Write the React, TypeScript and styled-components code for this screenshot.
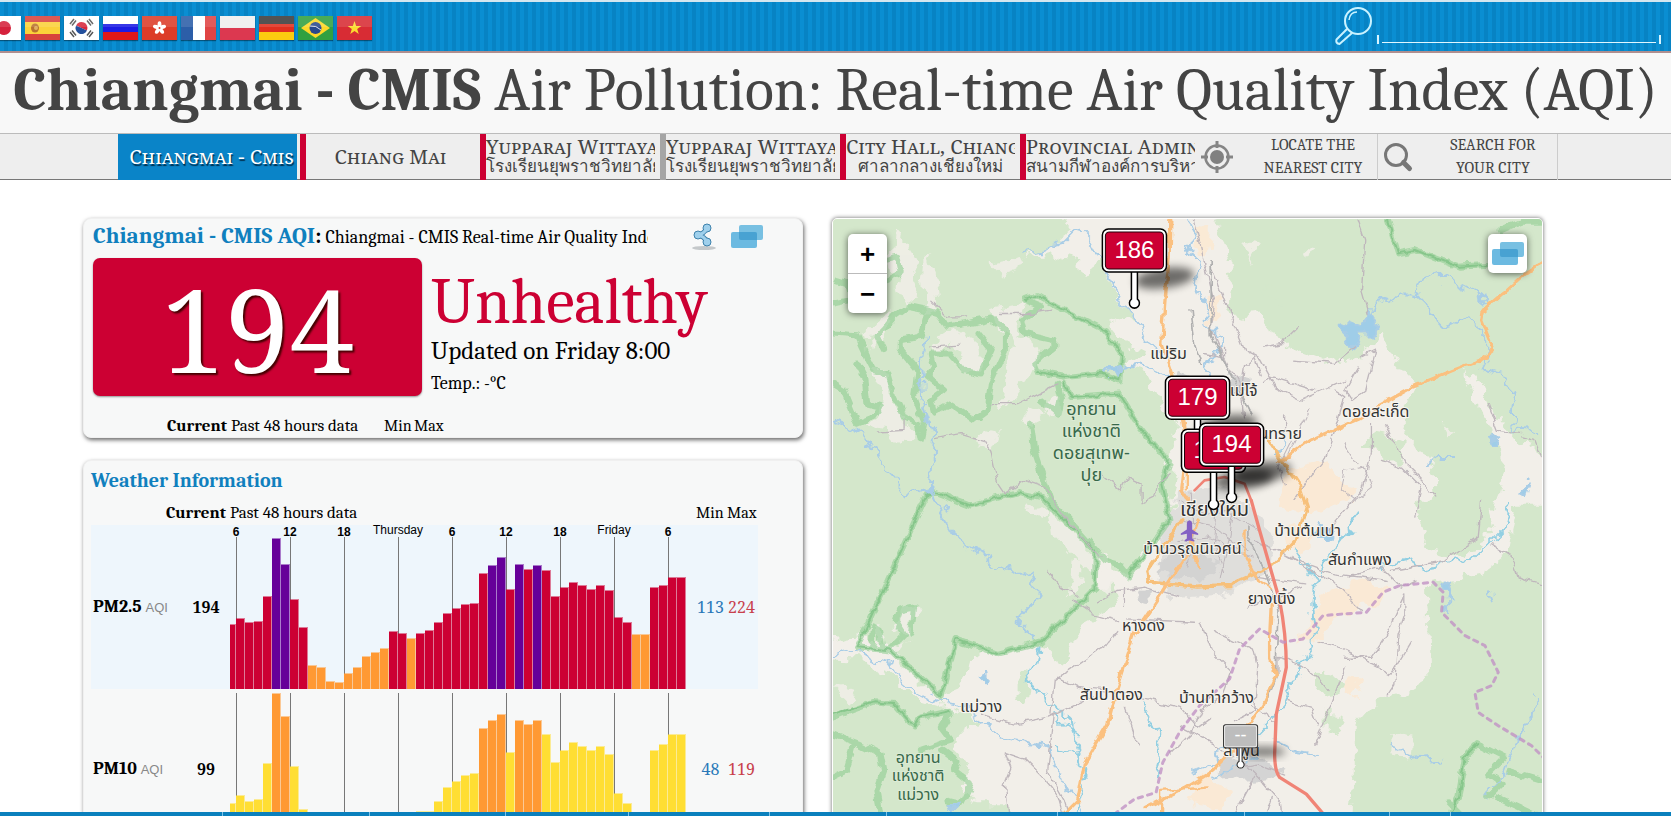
import React from 'react';
import styled, { createGlobalStyle, css } from 'styled-components';

const SERIF = 'Cambria, "Noto Serif", "Liberation Serif", serif';
const WIDE_SERIF = '"Noto Serif", Cambria, "Liberation Serif", serif';
const SANS = '"Liberation Sans", Arial, sans-serif';
const RED = '#cc0033';
const PURPLE = '#660099';
const ORANGE = '#ff9933';
const YELLOW = '#ffde33';

const GlobalStyle = createGlobalStyle`
  *, *::before, *::after { box-sizing: border-box; }
  body { margin: 0; background: #fff; font-family: ${SERIF}; color: #000; }
  button { border: 0; padding: 0; background: none; cursor: pointer; }
  svg { display: block; }
`;

const Page = styled.div`
  display: flex;
  flex-direction: column;
  height: 100vh;
  overflow: hidden;
`;

const TopBar = styled.header`
  display: flex;
  flex: none;
  align-items: center;
  justify-content: space-between;
  height: 53px;
  padding: 0 10px 0 0;
  overflow: hidden;
  border-top: 2px solid #d5e6f0;
  border-bottom: 2px solid #b08f90;
  background: repeating-linear-gradient(90deg, #0a8ed2 0 4px, #0783c4 4px 8px);
`;

const Flags = styled.nav`
  display: flex;
  gap: 4px;
  margin: 2px 0 0 -14px;
`;

const FlagLink = styled.a`
  display: block;
  width: 35px;
  height: 24px;
  box-shadow: 0 1px 1px rgba(0, 0, 0, 0.4);
`;

const SearchForm = styled.form`
  display: flex;
  align-items: flex-start;
  gap: 4px;
  height: 40px;
`;

const SearchField = styled.label`
  display: flex;
  align-items: flex-end;
  gap: 3px;
  height: 37px;
  &::before, &::after {
    content: '';
    width: 2px;
    height: 9px;
    background: #d8f4ff;
  }
`;

const SearchInput = styled.input`
  width: 274px;
  height: 26px;
  margin-bottom: 1px;
  padding: 0 4px;
  border: 0;
  border-bottom: 1px solid #e0f6ff;
  outline: 0;
  background: transparent;
  color: #fff;
  font: 16px ${SERIF};
`;

const TitleBar = styled.div`
  flex: none;
  height: 80px;
  background: #f8f8f8;
  overflow: hidden;
`;

const Title = styled.h1`
  margin: 0;
  color: #444;
  font-size: 60px;
  font-weight: 400;
  line-height: 76px;
  text-align: center;
  white-space: nowrap;
`;

const StationNav = styled.nav`
  display: grid;
  flex: none;
  grid-template-columns: repeat(8, minmax(0, 1fr));
  height: 47px;
  padding: 0 113px 0 118px;
  border-top: 1px solid #bbb;
  border-bottom: 1px solid #777;
  background: #eee;
`;

const StationLink = styled.a<{ $active?: boolean; $strip?: string }>`
  display: flex;
  flex-direction: column;
  justify-content: center;
  min-width: 0;
  overflow: hidden;
  margin: 0 3px 0 ${p => (p.$strip ? '2px' : '0')};
  border-left: ${p => (p.$strip ? `6px solid ${p.$strip}` : '0')};
  color: #444;
  text-align: center;
  text-decoration: none;
  white-space: nowrap;
  ${p => p.$active && css`
    margin-right: 1px;
    padding-left: 8px;
    background: #0a84c8;
    color: #fff;
    text-shadow: 1px 2px 1px #003050;
  `}
`;

const StationName = styled.span`
  overflow: hidden;
  font-family: ${WIDE_SERIF};
  font-size: 20px;
  font-variant: small-caps;
  line-height: 24px;
`;

const StationThai = styled.span`
  overflow: hidden;
  margin-top: -4px;
  font-size: 17px;
  line-height: 24px;
`;

const NavAction = styled.button`
  display: flex;
  align-items: center;
  gap: 20px;
  padding: 0 5px 0 2px;
  border-right: 1px solid #ccc;
  color: #444;
  font: 16px/23px ${SERIF};
  text-transform: uppercase;
`;

const NavActionLabel = styled.span`
  flex: 1;
`;

const Main = styled.main`
  display: grid;
  flex: 1;
  grid-template-columns: 720fr 711fr;
  gap: 29px;
  align-items: start;
  min-height: 0;
  padding: 38px 128px 0 83px;
`;

const Column = styled.div`
  display: flex;
  flex-direction: column;
  gap: 22px;
`;

const Card = styled.section`
  border: 1px solid #f0f0f0;
  border-radius: 8px;
  background: #f7f8f8;
  box-shadow: 1px 2px 4px rgba(0, 0, 0, 0.6);
`;

const AqiCard = styled(Card)`
  height: 220px;
  padding: 0 8px 0 9px;
`;

const AqiHeader = styled.div`
  display: flex;
  align-items: center;
  height: 36px;
`;

const AqiTitle = styled.h2`
  width: 555px;
  margin: 0 43px 0 0;
  overflow: hidden;
  font-size: 18px;
  font-weight: 400;
  line-height: 30px;
  white-space: nowrap;
`;

const AqiTitleLink = styled.a`
  color: #1080be;
  font-size: 23px;
  font-weight: 700;
  text-decoration: none;
`;

const AqiColon = styled.b`
  font-size: 23px;
`;

const IconButton = styled.button`
  display: block;
  margin-right: 14px;
`;

const AqiBody = styled.div`
  display: flex;
  gap: 9px;
  margin-top: 3px;
`;

const AqiValue = styled.div`
  width: 329px;
  height: 138px;
  border-radius: 7px;
  background: ${RED};
  box-shadow: 0 1px 2px rgba(0, 0, 0, 0.4);
  color: #fff;
  font-family: ${WIDE_SERIF};
  font-size: 115px;
  line-height: 142px;
  text-align: center;
  text-shadow: 2px 2px 2px #400;
`;

const AqiLevel = styled.p`
  margin: 6px 0 0;
  color: ${RED};
  font-size: 64px;
  line-height: 76px;
`;

const AqiUpdated = styled.p`
  margin: -6px 0 0;
  font-size: 25px;
  line-height: 34px;
`;

const AqiTemp = styled.p`
  margin: 0;
  font-size: 18px;
  line-height: 32px;
`;

const DataTable = styled.table<{ $inset?: boolean }>`
  border-collapse: collapse;
  font-size: 17px;
  line-height: 20px;
  margin: ${p => (p.$inset ? '16px 0 0' : '10px 0 0')};
  th, td { padding: 0; text-align: left; font-weight: 400; }
`;

const HeadCell = styled.th<{ $w: number; $bold?: boolean; $small?: boolean }>`
  width: ${p => p.$w}px;
  min-width: ${p => p.$w}px;
  && {
    padding: 0 ${p => (p.$bold ? '4px' : '0')} 2px 0;
    font-size: ${p => (p.$small ? '16px' : '17px')};
    text-align: ${p => (p.$bold ? 'right' : 'left')};
    font-weight: ${p => (p.$bold ? 700 : 400)};
    white-space: nowrap;
  }
`;

const SeriesRow = styled.tr<{ $tint?: boolean }>`
  background: ${p => (p.$tint ? '#eef6fc' : 'transparent')};
  border-bottom: 4px solid #f7f8f8;
`;

const SeriesName = styled.th`
  && { padding-left: 2px; font-weight: 700; font-size: 18px; white-space: nowrap; }
`;

const Unit = styled.small`
  color: #888;
  font: 13px ${SANS};
`;

const Current = styled.td`
  && { padding-right: 6px; font-family: ${WIDE_SERIF}; font-size: 16px; font-weight: 700; text-align: center; }
`;

const Bound = styled.td<{ $color: string }>`
  && { padding-right: 2px; color: ${p => p.$color}; font-family: ${WIDE_SERIF}; font-size: 16px; text-align: center; }
`;

const WeatherCard = styled(Card)`
  padding: 8px 8px 0 7px;
`;

const WeatherTitle = styled.h2`
  margin: 0;
  color: #1080be;
  font-size: 20px;
  line-height: 24px;
`;

const MapPanel = styled.section`
  position: relative;
  height: 720px;
  overflow: hidden;
  border: 1px solid #fff;
  border-radius: 5px 5px 0 0;
  background: #f2efe9;
  box-shadow: 0 0 4px rgba(0, 0, 0, 0.6);
  svg.tiles { width: 100%; height: 100%; }
`;

const MapControl = styled.div<{ $side: 'left' | 'right' }>`
  position: absolute;
  top: 15px;
  ${p => p.$side}: 15px;
  display: flex;
  flex-direction: column;
  width: 39px;
  border-radius: 5px;
  background: #fff;
  box-shadow: 0 1px 7px rgba(0, 0, 0, 0.6);
`;

const ZoomButton = styled.button`
  height: 39px;
  font: 700 26px/40px ${SANS};
  & + & { border-top: 1px solid #bbb; height: 40px; }
`;

const LayerButton = styled.button`
  display: flex;
  align-items: center;
  justify-content: center;
  height: 39px;
`;

const Footer = styled.footer`
  position: relative;
  display: flex;
  flex: none;
  gap: 1px;
  height: 4px;
  background: #7fc4ea;
`;

const FooterCell = styled.span<{ $grow: number }>`
  flex: ${p => p.$grow} 1 0;
  background: #0a80bd;
`;

const FLAGS: [string, React.ReactNode][] = [
  ['日本語', <><rect width="35" height="24" fill="#fff" /><circle cx="18" cy="12" r="7" fill="#d5213c" /></>],
  ['Español', <><rect width="35" height="24" fill="#d8423c" /><rect y="6" width="35" height="12" fill="#fbd23a" /><ellipse cx="10" cy="12" rx="4" ry="4.500" fill="#b9722e" /><circle cx="11" cy="12" r="2" fill="#e0b060" /></>],
  ['한국어', <><rect width="35" height="24" fill="#fff" /><g transform="rotate(25 17.500 12)"><path d="M11.500 12a6 6 0 0 1 12 0z" fill="#d8283c" /><path d="M11.500 12a6 6 0 0 0 12 0z" fill="#24509c" /></g><path d="M6 8l4-5M8 9.500l4-5M25 3l4 5M23 4.500l4 5M6 16l4 5M8 14.500l4 5M25 21l4-5M23 19.500l4-5" stroke="#555" strokeWidth="1.500" /></>],
  ['Русский', <><rect width="35" height="8" fill="#fff" /><rect y="8" width="35" height="8" fill="#1c1ce4" /><rect y="16" width="35" height="8" fill="#e01818" /></>],
  ['繁體中文', <><rect width="35" height="24" fill="#dc3c28" /><g fill="#fff">{[0, 72, 144, 216, 288].map(a => <ellipse key={a} cx="17.500" cy="8.500" rx="1.900" ry="3.300" transform={`rotate(${a} 17.500 12)`} />)}</g><circle cx="17.500" cy="12" r="1" fill="#dc3c28" /></>],
  ['Français', <><rect width="12" height="24" fill="#2c5ea8" /><rect x="12" width="12" height="24" fill="#fff" /><rect x="24" width="11" height="24" fill="#e04444" /></>],
  ['Polski', <><rect width="35" height="12" fill="#eee" /><rect y="12" width="35" height="12" fill="#dc3850" /></>],
  ['Deutsch', <><rect width="35" height="8" fill="#3c3c3c" /><rect y="8" width="35" height="8" fill="#e03020" /><rect y="16" width="35" height="8" fill="#fccc10" /></>],
  ['Português', <><rect width="35" height="24" fill="#30a040" /><path d="M3 12L17.500 2 32 12 17.500 22z" fill="#fcd828" /><circle cx="17.500" cy="12" r="6" fill="#28488c" /><path d="M12 10q6-1 11 4" stroke="#dde" fill="none" /></>],
  ['Tiếng Việt', <><rect width="35" height="24" fill="#d82c34" /><path d="M17.500 5l1.700 5h5.100l-4.100 3.100 1.500 5-4.200-3-4.200 3 1.500-5-4.100-3.100h5.100z" fill="#fbdc30" /></>],
];

const STATIONS = [
  { name: 'Chiangmai - Cmis', active: true },
  { name: 'Chiang Mai', strip: RED },
  { name: 'Yupparaj Wittayalai', thai: 'โรงเรียนยุพราชวิทยาลัย', strip: RED },
  { name: 'Yupparaj Wittayalai', thai: 'โรงเรียนยุพราชวิทยาลัย', strip: '#a5a5a5' },
  { name: 'City Hall, Chiangmai', thai: 'ศาลากลางเชียงใหม่', strip: RED },
  { name: 'Provincial Admin', thai: 'สนามกีฬาองค์การบริหาร', strip: RED },
];

const PM25 = [65, 71, 67, 68, 93, 151, 125, 90, 62, 24, 22, 8, 7, 16, 22, 33, 37, 41, 58, 56, 51, 56, 59, 67, 76, 81, 85, 86, 116, 124, 132, 100, 125, 120, 124, 119, 93, 102, 107, 104, 100, 104, 99, 72, 67, 55, 55, 102, 104, 112, 112];
const PM25_PURPLE = [5, 6, 29, 30, 32, 34];
const PM25_ORANGE = [9, 10, 11, 12, 13, 14, 15, 16, 17, 20, 45, 46];
const PM10 = [42, 50, 44, 46, 82, 152, 129, 79, 36, 28, 26, 24, 22, 24, 26, 28, 28, 28, 33, 33, 28, 34, 34, 44, 58, 64, 70, 72, 117, 125, 131, 93, 125, 121, 125, 111, 83, 95, 103, 99, 95, 99, 91, 52, 42, 28, 28, 95, 101, 111, 111];
const PM10_ORANGE = [5, 6, 28, 29, 30, 32, 33, 34];
const TICKS = ['6', '12', '18', 'Thursday', '6', '12', '18', 'Friday', '6'];

function Bars({ data, colorOf, labels }: { data: number[]; colorOf: (i: number) => string; labels?: boolean }) {
  const h = labels ? 164 : 152;
  return (
    <svg width="464" height={h}>
      {TICKS.map((t, i) => (
        <g key={i}>
          <rect x={6 + i * 54} y={labels ? 12 : 0} width="1" height="152" fill="#777" />
          {labels && (
            <text x={6 + i * 54} y={t.length > 2 ? 9 : 11} textAnchor="middle" fontFamily={SANS} fontSize="12" fontWeight={t.length > 2 ? 400 : 700}>{t}</text>
          )}
        </g>
      ))}
      {data.map((v, i) => {
        const x = i ? 6 + (i - 1) * 9 : 0;
        const w = i ? 9 : 6;
        return (
          <g key={i} fill={colorOf(i)}>
            <rect x={x} y={h - v} width={w} height={v} opacity="0.5" />
            <rect x={x} y={h - v + 1} width={w - 1} height={v - 1} />
          </g>
        );
      })}
    </svg>
  );
}

const WindowsIcon = () => (
  <svg width="32" height="24" viewBox="0 0 32 24">
    <rect x="8" y="0" width="24" height="15" rx="2" fill="#78c0e2" />
    <rect x="0" y="7" width="26" height="16" rx="2" fill="#5cb3de" opacity="0.900" />
    <path d="M8 7h16a2 2 0 0 1 2 2v6H10a2 2 0 0 1-2-2z" fill="#48a2d2" />
  </svg>
);

const ShareIcon = () => (
  <svg width="26" height="28" viewBox="0 0 26 28">
    <ellipse cx="13" cy="25" rx="12" ry="2" fill="#c4c8ca" />
    <path d="M16 5q-3 6-9 7 6 1 9 7" fill="none" stroke="#3e82ac" strokeWidth="5" />
    <g fill="#9fd0ec" stroke="#3e82ac"><circle cx="16" cy="5" r="4" /><circle cx="7" cy="12" r="4" /><circle cx="16" cy="19" r="4" /></g>
    <path d="M16 5q-3 6-9 7 6 1 9 7" fill="none" stroke="#9fd0ec" strokeWidth="3" />
  </svg>
);

const TargetIcon = () => (
  <svg width="34" height="34" viewBox="0 0 34 34">
    <circle cx="17" cy="17" r="11.500" fill="none" stroke="#858585" strokeWidth="2.500" />
    <circle cx="17" cy="17" r="7" fill="#808080" />
    <path d="M17 1v7M17 26v7M1 17h7M26 17h7" stroke="#858585" strokeWidth="3" />
  </svg>
);

const LensIcon = () => (
  <svg width="34" height="34" viewBox="0 0 34 34">
    <circle cx="16" cy="15" r="10.500" fill="none" stroke="#777" strokeWidth="3" />
    <path d="M23.500 22.500l6 6" stroke="#777" strokeWidth="5" strokeLinecap="round" />
  </svg>
);

const SearchIcon = () => (
  <svg width="38" height="38" viewBox="0 0 38 38" fill="none" stroke="#c9f2ff" strokeWidth="2">
    <circle cx="23" cy="14" r="13" />
    <path d="M14 13q1-8 8-8" strokeWidth="1.500" />
    <path d="M12 22L1.500 32.500q-1 4 3 4.500L17 26" />
  </svg>
);

/* Areas and lines of the map are drawn in thirds of a pixel. */
function MapTiles() {
  return (
    <svg className="tiles" viewBox="0 0 708 718" preserveAspectRatio="xMinYMin slice" role="img" aria-label="Map of Chiang Mai">
      <defs>
        <filter id="soft" x="-50%" y="-50%" width="200%" height="200%"><feGaussianBlur stdDeviation="4" /></filter>
        <filter id="rough" filterUnits="userSpaceOnUse" x="0" y="0" width="2200" height="2200">
          <feTurbulence type="fractalNoise" baseFrequency="0.022" numOctaves="3" seed="4" />
          <feDisplacementMap in="SourceGraphic" scale="60" xChannelSelector="R" yChannelSelector="G" />
        </filter>
        <filter id="wavy" filterUnits="userSpaceOnUse" x="0" y="0" width="2200" height="2200">
          <feTurbulence type="fractalNoise" baseFrequency="0.03" numOctaves="2" seed="9" />
          <feDisplacementMap in="SourceGraphic" scale="24" xChannelSelector="R" yChannelSelector="G" />
        </filter>
      </defs>
      <rect width="708" height="718" fill="#f2efe9" />
      <g transform="translate(-9 -9) scale(0.333333)" fill="none" strokeLinejoin="round" strokeLinecap="round">
        {/* forest */}
        <g fill="#d4e7cb" filter="url(#rough)">
          <path d="M0 0H700L740 60 690 100 600 150 680 130 760 150 770 200 830 160 880 260 930 320 850 340 900 400 960 430 900 460 960 480 1020 600 1060 640 1020 760 1060 800 1035 930 990 990 910 1095 860 1060 820 1020 815 1130 870 1120 880 1190 790 1240 700 1320 640 1300 520 1335 440 1330 430 1400 350 1455 310 1430 230 1370 200 1310 100 1275 0 1290z" />
          <path d="M0 1345L100 1350 200 1390 290 1470 400 1500 470 1530 400 1580 390 1620 440 1680 410 1720 460 1780 550 1780V1900H0z" />
          <path d="M1165 0H2200V770L2080 690 2000 600 1960 500 1920 480 1960 600 2000 660 2040 760 2010 900 1920 900 1830 880 1820 770 1740 660 1740 590 1770 530 1690 420 1670 370 1600 440 1520 460 1410 420 1340 390 1310 310 1240 320 1215 280 1225 190 1200 110z" />
          <path d="M1770 880H1980L2000 960 1960 1020 1880 1040 1790 1010 1800 960z" />
          <path d="M2080 880H2200V1900H1570L1590 1700 1590 1550 1660 1470 1740 1450 1820 1400 1810 1180 1810 1120 1970 1090 2050 1030z" />
          <path d="M1480 1380l60 20 20 40-60 10-20-30zM1500 1500l60 10-20 70-40-20zM700 1250l60 20-50 100-40-60zM580 1370l40 10-10 100-30-20zM890 880l100 60-80 60-60-30zM1640 670l100 20-20 80-100-60zM1300 240l50-20 10 60z" />
        </g>
        {/* clearings in the forest */}
        <g fill="#f2efe9" opacity="0.850" filter="url(#rough)">
          <path d="M210 60l50 60 20 90-20 80-40-60-20-100zM310 130l20 60 10 90-30 30-10-80zM330 380l60-20 70 30 10 80-50 10-40-70-60 10zM500 300l110-20-40 90 60 10 10 80-60 80-50 60 10-90 30-110zM150 330l60-30-20 60-50 60-10-60zM140 480l50 10 30 130 60 60-50 20-40-40-80-10 60-30 10-50zM480 650l50 10-20 60-60-20zM500 160l90-20 10 30-70 20zM610 590l40 20-20 40-40-20zM700 560l-50 40 50 20zM670 890l130 120 80 110-40 20-40-40-120-130z" />
          <path d="M230 1200l50-10-30 80-30-20zM150 1260l20-10 10 60 70-20-50 60-50-30zM27 1430l70 10-20 40zM740 1050l30 10-10 90-30 10zM620 870l50 40-20 30-40-40zM1250 100l50 10-20 40zM1850 640l50 20-30 20zM1440 110l40 5-30 20zM1700 1570l60 10-10 60-50-10z" />
        </g>
        {/* farm land */}
        <g fill="#fbe9d3" opacity="0.900" filter="url(#rough)">
          <path d="M1110 40l50 20-10 90-40-20zM1400 780l100-30 50 60 50 30-40 40-100 30-100-30zM1400 940l70 40-40 60-60-50zM1640 1110l60 20-60 60-90 10-70 90-60 0 90-150zM1180 250l20 60-40 40-20-60zM1130 1690l90 50-30 50-100-10zM1570 1400l40 10-20 50-40-20z" />
        </g>
        {/* built-up land */}
        <g fill="#d2d2d2" filter="url(#rough)">
          <path d="M1060 850l100-20 110 40 50 60 30 100-40 80-120 40-150 10-40-60 20-140z" opacity="0.600" />
          <path d="M1000 1055l90-60 90 60-30 50-150-10zM1160 1660l110-40 110 60-30 20-90 10-50-10z" opacity="0.900" />
          <path d="M1220 490l50 10 10 50-60 0zM1050 480l50 20-20 40-40-10zM950 1140l30 10-10 30-40-10z" />
        </g>
        {/* park borders */}
        <g stroke="#8fce92" strokeWidth="18" opacity="0.600" filter="url(#wavy)">
          <path d="M27 370L100 375 130 440 150 480 190 490 210 560 240 620 280 640 290 690 300 640 270 560 280 480 230 420 230 390 290 380 310 300 340 310 370 350 430 340 500 325 545 360 545 420 500 520 490 600 450 630 380 580 330 610 320 570 360 540 310 500 330 470 320 430 380 430 420 480 470 490 500 420 460 370" />
          <path d="M27 520L60 540 80 590 100 640 150 620 170 590 130 580 120 500 100 460M180 420L160 380 210 320 250 290 300 300" />
          <path d="M600 270L640 255 700 290 760 320 840 360 890 430 885 510 830 490 720 500 640 485 630 460 690 410 690 390 600 370 590 330 650 290z" />
          <path d="M700 520L710 560 700 610 650 570M720 520L740 560 885 550 940 640 1035 760 1010 820 1035 930 990 990 910 1095 880 1060 840 1050 815 1020 680 870 630 720 620 640" />
          <path d="M300 870L100 1310 200 1320 350 1455 395 1285 520 1330 650 1295 810 1135 815 1020 650 860 580 845 440 885 320 840z" />
          <path d="M200 1310L240 1270 215 1230 225 1200 270 1190 260 1270M145 1310L150 1250 165 1260 175 1310" />
          <path d="M27 1520L80 1500 150 1475 210 1480 270 1550 290 1520 380 1500 350 1550 380 1590 290 1620M27 1570l80 30 60 30 10 50-20 60 20 110M27 1700l40-20 20-70M360 1620L400 1650 390 1680 440 1720 410 1780 370 1770" />
          <path d="M1690 30L1720 130 1770 120 1900 170 1980 165M2030 60L2090 35 2151 35" />
          <path d="M1880 1800L1900 1760 1920 1640 1960 1600 2040 1640 1990 1690 2030 1720 1990 1760M2050 1680l100 30M2020 1760l130 60M1900 1805l-30-30" />
          <path d="M180 150l40-10 10 50-40 20M40 210l30 10 10 50-50 10" />
        </g>
        <g stroke="#74bd7c" strokeWidth="6" opacity="0.650" filter="url(#wavy)">
          <path d="M600 270L640 255 760 320 840 360 890 430 885 510 830 490 720 500 640 485M720 520L740 560 885 550 940 640 1035 760 1010 820 1035 930 990 990 910 1095" />
          <path d="M300 870L100 1310 200 1320 350 1455 395 1285 520 1330 650 1295 810 1135 815 1020 650 860 580 845 440 885 320 840z" />
          <path d="M27 1510L150 1475 210 1480 270 1550 290 1520 380 1500M1690 30L1720 130 1770 120 1900 170 1980 165M1880 1800L1900 1760 1920 1640 1960 1600" />
        </g>
        {/* water */}
        <g stroke="#a9cde6" strokeWidth="6" filter="url(#rough)">
          <path d="M600 135l50-10 30-20 40-10 30-30 30 5 20 20 30 60 30 60 40 70 50 60 20 60 40 30" />
          <path d="M1100 30l10 40-20 60 30 50-10 60 30 40 10 60 40 40-10 60-40 20 10 60 10 60" />
          <path d="M300 380l-10 80 10 130 30 80-10 160 20 50 50 90 60 50 80 50 60 20 30-10 20 70-60 70 50 60" />
          <path d="M27 625l50 20 60 60 50 80 70 70 60-20" />
          <path d="M850 480l90-20 50 10 50 30" />
          <path d="M1640 340l10-50 60-40 60 0 20-40 60-10 40 20 40 20 50 40M1770 250l40 40 30 60 50-20 70 10 30 40 0 60-20 40 70 20 30 60-10 100 80 5" />
          <path d="M27 1340l40-20 60 20 60 10 30 40 60 50 60 30 80 20 60 40 60 50 70 10 70 30 30 80 40 60 20 40" />
          <path d="M640 1300l-10 70-20 50 70 50 60 60 20 90 20 70-20 70-10 50M690 1510l40 40 40 30M690 1600l60 20 20 30M960 1480l30 60 20 110-10 40" stroke="#92cfe2" />
          <path d="M1560 960l50-60-80 110-60 90M1410 1020l60 90-10 70 10 80 0 40-40 60-50 120-50 60-60 60M1670 1070l80-20 50 20 60-10 80-10 40-40 60-60 20-80" stroke="#92cfe2" />
          <path d="M1860 1110l10 60 0 40M1985 1140l10 30M1700 1600l50 20 30 25 60-5M1160 1700l60-30 80-30M1350 1590l60 30 70 10M2130 1460l-10 60-30 40-30 70-20 50-60 80" />
          <path d="M1100 1680l60-20 20-30 100-20M1800 760l30-20 50 0M1350 740l40-60" />
          <path d="M1560 330l50 20 20-50 30 50-10 20-40 0-10 40-40-10 0-30z" fill="#9fcde8" />
          <path d="M845 480l40-5-5 20zM1490 950l50 10-30 20-50 0zM1850 1120l20-10 10 60zM470 1395l20-5 0 20-20 5zM1990 680l30-5-10 25zM2085 850l30-40-10 50zM380 1780l30-5-20 20z" fill="#9fcde8" />
        </g>
        {/* minor roads */}
        <g stroke="#bfb7bc" strokeWidth="4" filter="url(#wavy)">
          <path d="M160 665l80-5 0-30M330 685l80-15 70 20 20 30 20 100 20 30 60-40 60 20 60 90 110 120M500 580l80 0 60-30 60-30M320 270l50 50 60 0M520 310l100 0 60-10M320 410l90-5M830 790l60 50 20-40 40 20 0 60 40-20 10-40 40-30" />
          <path d="M1110 30l30 130 30 120-10 80 50 110 40 40 10 110M1140 430l60 10 0-30M1600 30l20 60-10 150 20 70M1320 410l50-10 50-50M1160 170l60 150 40 100 40 20 50 90 80 40 90-40 40-20M1410 450l120 10 60-50M1310 500l-20-60-30 30-10 60-30 20M1320 520l20-20 130 40M1380 620l0 50M1530 540l30 20-30 100-30 90-50 60-40 60M1640 640l0 90-30 110-50 60-50 60M1680 640l60 120 60 60 30 40M2090 680l40 10 20 50M1990 580l30 80 70 10M1610 440l40-20-30 120-40 30-20-30 40-70M1570 1100l100-30 60 60 40-20" />
          <path d="M690 1510l-20 170 50 90 20 70M880 1260l-30 40-160 110-10 100M700 1400l60 30 110 10 200 50 50 60 40-30M540 1620l20 50-20 50 10 90-20 30M540 1625l60 20 50 50 50 60 20 70M470 1510l100 30 100-20 130-60M900 1490l30 90 20 20M910 1225l200 10M1130 1240l30 80 60 60-30 80-60 40-30 70-60 60M1270 1190l160-60M1170 1260l120 60 10 40-10 140-60 30M1360 1390l0-50 60 20 60 40 30 40M1480 1290l60 20 100 50 60 30 60-100M1560 1370l-60 160-30 70M1390 1470l70 20 20 50M1280 1480l70 50 0 60M1240 1670l60-10 80 30M1290 1700l-70 130M1340 1760l-40 120M1250 1650l60 60 60 70 10 80M1070 1550l60 30 100 60M1740 1150l-60 130-40 60-80 0M1740 1150l0 60-20 60-10 150-20 30" />
          <path d="M1970 870l-10 110-100 70-160 30M2000 1000l60 40 20 60 70 20M1610 1200l-80-80-170-100M1290 990l130 60 110 40 160 20M1290 1100l150 20M750 1170l60 40 70 20M900 1130l0 60M670 1080l40 50 50 30M820 1180l60-40 80-10 100 30M1770 920l20-90-60-60-60-20" />
          <path d="M1060 870l80 40 60-10 100 60M1080 930l90 20 100 70M1100 850l10 120-20 100M1180 850l-10 150 30 80M1230 900l-40 200M1060 990l90-10 130 60M1400 690l-40 80 20 60M1560 700l40 60M1450 600l-60 130M1560 780l60-10 20 60-50 40-40-30z" strokeWidth="3" />
        </g>
        <g stroke="#b0b0b0" strokeWidth="5" filter="url(#wavy)">
          <path d="M1160 150l0 230 60 110 60 120M1100 300l10 100 20 60M1270 950l0 30 60 120 30 100-5 160 0 40-20 50-60 90" />
        </g>
        {/* main roads */}
        <g stroke="#fbc07f" strokeWidth="10" filter="url(#wavy)">
          <path d="M1036 27l-2 120-12 120-10 130 30 90 30 130 15 90-15 130 20 30" />
          <path d="M2150 155l-45 30-60 55-70 60-5 30 35 90-40 30-80 30-120 50-100 55-60 40-150 65-70 50-20 10" />
          <path d="M1075 925l-105 155 5 35 140 15 100-5 120-55 80-80 30-100-20-60-60-90-40-60-70-20-80 0-80 20-20 60" stroke="#f7c07a" />
          <path d="M1090 1030l-160 240-60 190-20 80-70 120-20 110-50 50M1340 1180l-5 100 0 60 20 50-40 90-40 60-50 80-60 60-80 50-120 60" />
          <path d="M1010 1740l140-10M1010 1740l0 130M1090 760l0 80M1260 960l0 70 40 80 40 20M1120 930l-20 60 20 80" strokeWidth="7" />
        </g>
        <g stroke="#f08476" strokeWidth="10">
          <path d="M1280 870l25 90 60 210 q20 100 20 200l-30 140-5 120q0 50 15 70l80 50 60 70" />
          <path d="M1110 840l30-30 60-10 60 20 20 50" strokeWidth="8" />
        </g>
        <path d="M870 1810l60-45 65-20 20-90 50-90 60-80 90-80 30-90 60-60 70 40 60-10 60-70 130-10 50-60 50-20 100-10 30 30-5 60 70 70 60 30 40 80-20 40-50 20 10 60 60 40 100 60 40 40" stroke="#c192c4" strokeWidth="9" strokeDasharray="13 16" opacity="0.800" />
        <path d="M1095 930q8 0 8 12v15l18 12v5l-18-4v14l6 5v4l-14-3-14 3v-4l6-5v-14l-18 4v-5l18-12v-15q0-12 8-12z" fill="#8461c4" />
      </g>
      <g fontFamily='"Noto Sans Thai", "Noto Sans", sans-serif' fill="#333" stroke="#f8f6f0" strokeWidth="2" paintOrder="stroke" textAnchor="middle" fontSize="16">
        <text x="335" y="140">แม่ริม</text>
        <text x="408" y="177">แม่โจ้</text>
        <text x="442" y="220">สันทราย</text>
        <text x="542" y="198">ดอยสะเก็ด</text>
        <text x="381" y="297" fontSize="20">เชียงใหม่</text>
        <text x="474" y="317">บ้านต้นเปา</text>
        <text x="526" y="346">สันกำแพง</text>
        <text x="359" y="335">บ้านวรุณนิเวศน์</text>
        <text x="438" y="384">ยางเนิ้ง</text>
        <text x="310" y="411">หางดง</text>
        <text x="278" y="480">สันป่าตอง</text>
        <text x="383" y="483">บ้านท่ากว้าง</text>
        <text x="148" y="492">แม่วาง</text>
        <text x="408" y="536">ลำพูน</text>
      </g>
      <g fontFamily='"Noto Sans Thai", "Noto Sans", sans-serif' fill="#37684a" stroke="#dcebd5" strokeWidth="2" paintOrder="stroke" textAnchor="middle">
        <g fontSize="18">
          <text x="258" y="196">อุทยาน</text>
          <text x="258" y="218">แห่งชาติ</text>
          <text x="258" y="240">ดอยสุเทพ-</text>
          <text x="258" y="262">ปุย</text>
        </g>
        <g fontSize="16">
          <text x="85" y="543">อุทยาน</text>
          <text x="85" y="561">แห่งชาติ</text>
          <text x="85" y="580">แม่วาง</text>
        </g>
      </g>
      <Pin x={301} y={10} tip={85} value="186" />
      <Pin x={364} y={157} tip={232} value="179" />
      <Pin x={380} y={210} tip={286} value="179" />
      <Pin x={398} y={204} tip={279} value="194" />
      <g>
        <ellipse cx="430" cy="532" rx="22" ry="5" fill="#000" opacity="0.500" filter="url(#soft)" />
        <path d="M406 524h2v18a3 3 0 1 1-2 0z" fill="#fff" stroke="#222" strokeWidth="2" paintOrder="stroke" />
        <rect x="390" y="505" width="34" height="23" rx="2" fill="#bdbdbd" stroke="#333" />
        <rect x="391" y="506" width="32" height="21" rx="2" fill="none" stroke="#e8e8e8" />
        <text x="407" y="521" textAnchor="middle" fontFamily={SANS} fontSize="18" fill="#fff">--</text>
      </g>
    </svg>
  );
}

function Pin({ x, y, tip, value }: { x: number; y: number; tip: number; value: string }) {
  return (
    <g>
      <ellipse cx={x + 30} cy={tip - 26} rx="30" ry="10" fill="#000" opacity="0.550" filter="url(#soft)" transform={`rotate(-8 ${x + 30} ${tip - 26})`} />
      <path d={`M${x - 3} ${y + 40}V${tip - 5}a5 5 0 1 0 6 0V${y + 40}z`} fill="#fff" stroke="#000" strokeWidth="1.500" />
      <rect x={x - 32} y={y} width="64" height="43" rx="6" fill="#fff" stroke="#000" strokeWidth="1.500" />
      <rect x={x - 29} y={y + 3} width="58" height="37" rx="4" fill={RED} stroke="#220008" />
      <text x={x} y={y + 29} textAnchor="middle" fontFamily={SANS} fontSize="24" fill="#fff">{value}</text>
    </g>
  );
}

const FOOTER_CELLS = [223, 147, 136, 123, 141, 116, 171, 187, 145, 61, 221];

export default function App() {
  return (
    <Page>
      <GlobalStyle />
      <TopBar>
        <Flags aria-label="Language">
          {FLAGS.map(([name, art]) => (
            <FlagLink key={name} href="#" title={name} aria-label={name}>
              <svg width="35" height="24" viewBox="0 0 35 24">{art}<rect width="35" height="11" fill="#fff" opacity="0.120" /></svg>
            </FlagLink>
          ))}
        </Flags>
        <SearchForm>
          <SearchIcon />
          <SearchField>
            <SearchInput type="text" aria-label="Search" />
          </SearchField>
        </SearchForm>
      </TopBar>
      <TitleBar>
        <Title><b>Chiangmai - CMIS</b> Air Pollution: Real-time Air Quality Index (AQI)</Title>
      </TitleBar>
      <StationNav aria-label="Stations">
        {STATIONS.map((s, i) => (
          <StationLink key={i} href="#" $active={s.active} $strip={s.strip}>
            <StationName>{s.name}</StationName>
            {s.thai && <StationThai>{s.thai}</StationThai>}
          </StationLink>
        ))}
        <NavAction type="button"><TargetIcon /><NavActionLabel>Locate the nearest city</NavActionLabel></NavAction>
        <NavAction type="button"><LensIcon /><NavActionLabel>Search for<br />your city</NavActionLabel></NavAction>
      </StationNav>
      <Main>
        <Column>
          <AqiCard>
            <AqiHeader>
              <AqiTitle><AqiTitleLink href="#">Chiangmai - CMIS AQI</AqiTitleLink><AqiColon>:</AqiColon> Chiangmai - CMIS Real-time Air Quality Index</AqiTitle>
              <IconButton type="button" aria-label="Share"><ShareIcon /></IconButton>
              <IconButton type="button" aria-label="Open in window"><WindowsIcon /></IconButton>
            </AqiHeader>
            <AqiBody>
              <AqiValue>194</AqiValue>
              <div>
                <AqiLevel>Unhealthy</AqiLevel>
                <AqiUpdated>Updated on Friday 8:00</AqiUpdated>
                <AqiTemp>Temp.: -°C</AqiTemp>
              </div>
            </AqiBody>
            <DataTable $inset>
              <thead>
                <tr>
                  <HeadCell $w={138} $bold>Current</HeadCell>
                  <HeadCell $w={153}>Past 48 hours data</HeadCell>
                  <HeadCell $w={30} $small>Min</HeadCell>
                  <HeadCell $w={32} $small>Max</HeadCell>
                </tr>
              </thead>
            </DataTable>
          </AqiCard>
          <WeatherCard>
            <WeatherTitle>Weather Information</WeatherTitle>
            <DataTable>
              <thead>
                <tr>
                  <HeadCell $w={139} colSpan={2} $bold>Current</HeadCell>
                  <HeadCell $w={466}>Past 48 hours data</HeadCell>
                  <HeadCell $w={31} $small>Min</HeadCell>
                  <HeadCell $w={31} $small>Max</HeadCell>
                </tr>
              </thead>
              <tbody>
                <SeriesRow $tint>
                  <SeriesName scope="row">PM2.5 <Unit>AQI</Unit></SeriesName>
                  <Current>194</Current>
                  <td><Bars labels data={PM25} colorOf={i => (PM25_PURPLE.includes(i) ? PURPLE : PM25_ORANGE.includes(i) ? ORANGE : RED)} /></td>
                  <Bound $color="#2a78b8">113</Bound>
                  <Bound $color="#c8404c">224</Bound>
                </SeriesRow>
                <SeriesRow>
                  <SeriesName scope="row">PM10 <Unit>AQI</Unit></SeriesName>
                  <Current>99</Current>
                  <td><Bars data={PM10} colorOf={i => (PM10_ORANGE.includes(i) ? ORANGE : YELLOW)} /></td>
                  <Bound $color="#2a78b8">48</Bound>
                  <Bound $color="#c8404c">119</Bound>
                </SeriesRow>
              </tbody>
            </DataTable>
          </WeatherCard>
        </Column>
        <MapPanel aria-label="Stations map">
          <MapTiles />
          <MapControl $side="left">
            <ZoomButton type="button" aria-label="Zoom in">+</ZoomButton>
            <ZoomButton type="button" aria-label="Zoom out">−</ZoomButton>
          </MapControl>
          <MapControl $side="right">
            <LayerButton type="button" aria-label="Open in window"><WindowsIcon /></LayerButton>
          </MapControl>
        </MapPanel>
      </Main>
      <Footer>
        {FOOTER_CELLS.map((w, i) => <FooterCell key={i} $grow={w} />)}
      </Footer>
    </Page>
  );
}
